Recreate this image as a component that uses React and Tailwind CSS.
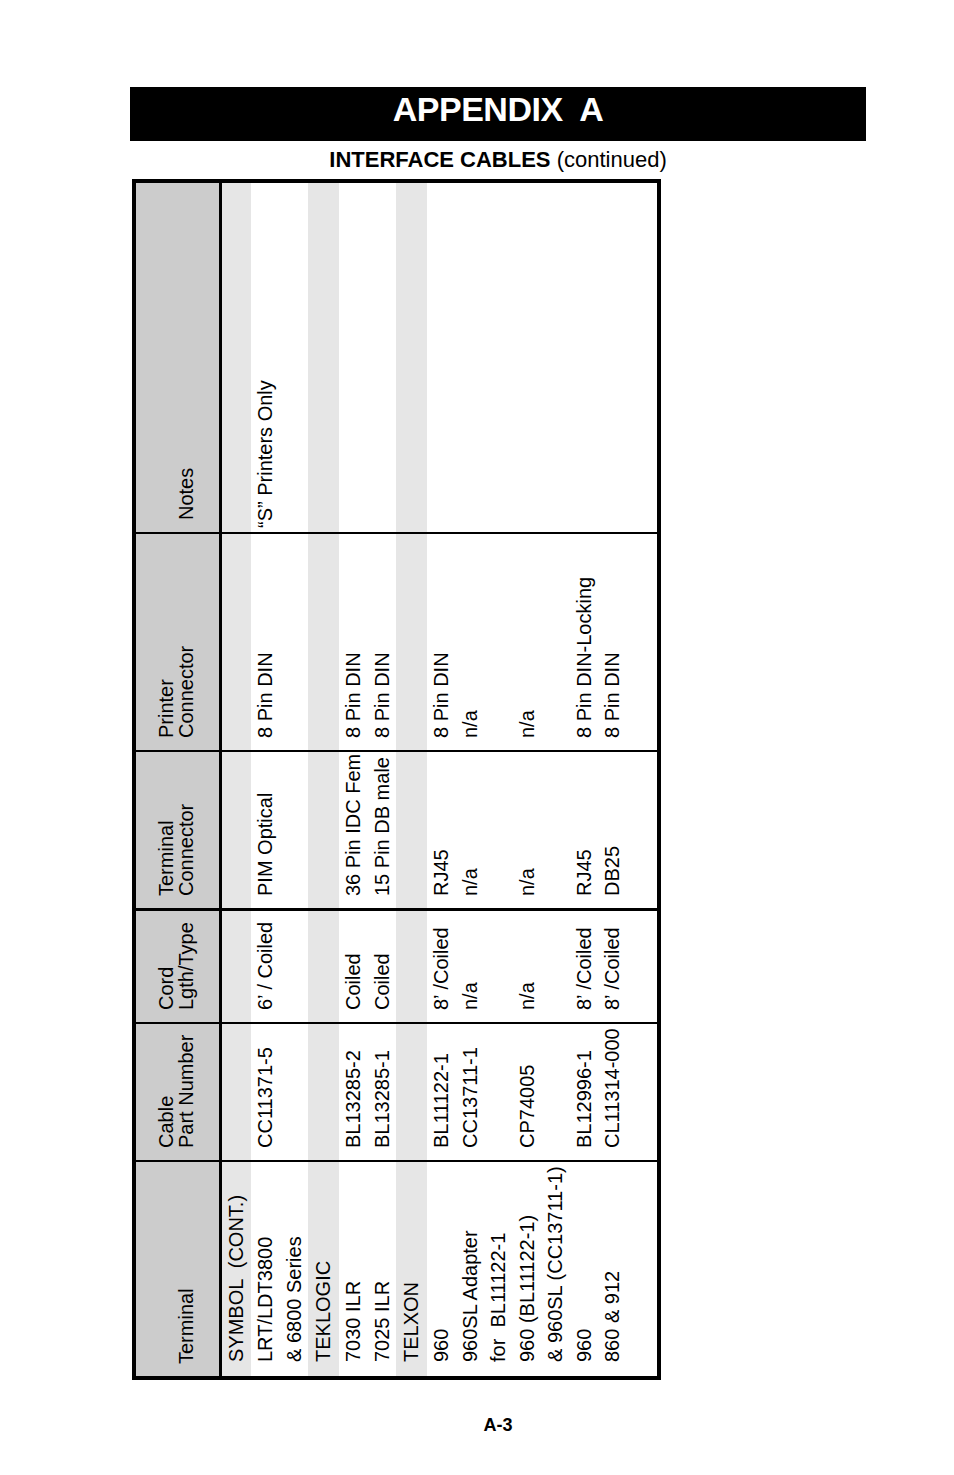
// Appendix A - interface cables table (page printed sideways)
import React from "react";

const cols = [
  { key: "terminal", size: "h-[216px]", pad: "ps-[14px]", line: "border-e-2" },
  { key: "part", size: "h-[138px]", pad: "ps-3", line: "border-e-2" },
  { key: "cord", size: "h-[114px]", pad: "ps-3", line: "border-e-[3px]" },
  { key: "tconn", size: "h-[158px]", pad: "ps-3", line: "border-e-2" },
  { key: "pconn", size: "h-[218px]", pad: "ps-3", line: "border-e-2" },
  { key: "notes", size: "h-[349px]", pad: "ps-1", line: "" },
];

const headers = [
  ["", "Terminal"],
  ["Cable", "Part Number"],
  ["Cord", "Lgth/Type"],
  ["Terminal", "Connector"],
  ["Printer", "Connector"],
  ["", "Notes"],
];

const rows = [
  { band: true, h: "w-[29px] leading-[29px]", cells: ["SYMBOL  (CONT.)"] },
  { h: "w-[28.5px] leading-[28.5px]", cells: ["LRT/LDT3800", "CC11371-5", "6’ / Coiled", "PIM Optical", "8 Pin DIN", "“S” Printers Only"] },
  { h: "w-[28.5px] leading-[28.5px]", cells: ["& 6800 Series"] },
  { band: true, h: "w-[31px] leading-[31px]", cells: ["TEKLOGIC"] },
  { h: "w-[28.5px] leading-[28.5px]", cells: ["7030 ILR", "BL13285-2", "Coiled", "36 Pin IDC Fem", "8 Pin DIN"] },
  { h: "w-[28.5px] leading-[28.5px]", cells: ["7025 ILR", "BL13285-1", "Coiled", "15 Pin DB male", "8 Pin DIN"] },
  { band: true, h: "w-[31px] leading-[31px]", cells: ["TELXON"] },
  { h: "w-[28.5px] leading-[28.5px]", cells: ["960", "BL11122-1", "8’ /Coiled", "RJ45", "8 Pin DIN"] },
  { h: "w-[28.5px] leading-[28.5px]", cells: ["960SL Adapter", "CC13711-1", "n/a", "n/a", "n/a"] },
  { h: "w-[28.5px] leading-[28.5px]", cells: ["for  BL11122-1"] },
  { h: "w-[28.5px] leading-[28.5px]", cells: ["960 (BL11122-1)", "CP74005", "n/a", "n/a", "n/a"] },
  { h: "w-[28.5px] leading-[28.5px]", cells: ["& 960SL (CC13711-1)"] },
  { h: "w-[28.5px] leading-[28.5px]", cells: ["960", "BL12996-1", "8’ /Coiled", "RJ45", "8 Pin DIN-Locking"] },
  { h: "w-[28.5px] leading-[28.5px]", cells: ["860 & 912", "CL11314-000", "8’ /Coiled", "DB25", "8 Pin DIN"] },
];

function CableTable() {
  // vertical-rl + 180deg turn = text running bottom to top, rows left to right
  return (
    <div className="[writing-mode:vertical-rl] rotate-180 flex flex-col w-[529px] h-[1201px] border-4 border-black text-[20px]">
      <div className="flex w-[83px] shrink-0 bg-[#cccccc]">
        {cols.map((c, i) => (
          <div
            key={c.key}
            className={`flex flex-col justify-end shrink-0 ${c.size} ${c.line} border-black ps-3 leading-[20px] [padding-block-end:23px] whitespace-nowrap`}
          >
            {headers[i][0] && <div>{headers[i][0]}</div>}
            <div>{headers[i][1]}</div>
          </div>
        ))}
      </div>
      <div className="w-[3px] shrink-0 bg-black" />
      {rows.map((r, ri) => (
        <div key={ri} className={`flex shrink-0 ${r.h} ${r.band ? "bg-[#e6e6e6]" : ""}`}>
          {cols.map((c, i) => (
            <div key={c.key} className={`shrink-0 ${c.size} ${c.line} border-black ${c.pad} whitespace-pre`}>
              {r.cells[i] || ""}
            </div>
          ))}
        </div>
      ))}
      <div className="flex flex-1">
        {cols.map((c) => (
          <div key={c.key} className={`shrink-0 ${c.size} ${c.line} border-black`} />
        ))}
      </div>
    </div>
  );
}

export default function App() {
  return (
    <div className="w-[954px] h-[1475px] bg-white text-black font-['Liberation_Sans',Arial,sans-serif] pt-[87px]">
      <div className="ml-[130px] w-[736px] h-[54px] bg-black flex items-center justify-center pb-[10px]">
        <span className="text-white font-bold text-[34px] tracking-[-0.5px] leading-none whitespace-pre">APPENDIX  A</span>
      </div>
      <div className="ml-[130px] w-[736px] mt-[6px] text-center text-[22px] leading-[26px]">
        <span className="font-bold">INTERFACE CABLES</span> (continued)
      </div>
      <div className="ml-[132px] mt-[6px]">
        <CableTable />
      </div>
      <div className="ml-[130px] w-[736px] mt-[35px] text-center text-[18px] leading-[20px] font-bold">A-3</div>
    </div>
  );
}
